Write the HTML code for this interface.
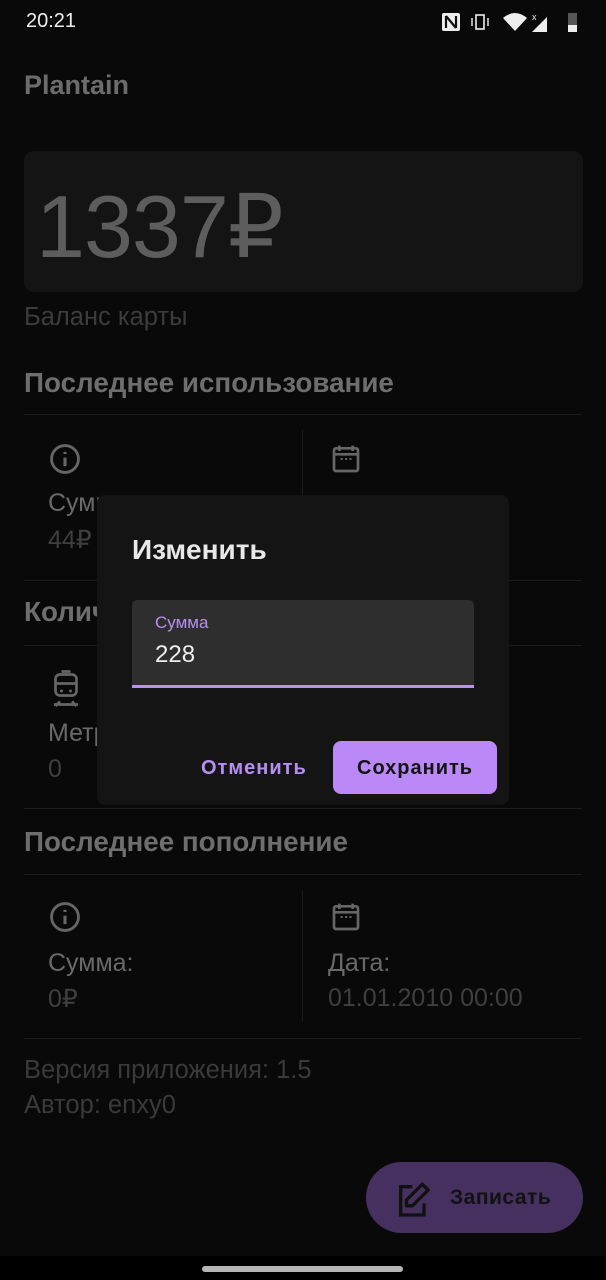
<!DOCTYPE html>
<html><head><meta charset="utf-8"><style>
*{margin:0;padding:0;box-sizing:border-box}
body{width:606px;height:1280px;background:#090909;font-family:"Liberation Sans",sans-serif;position:relative;overflow:hidden;color:#6a6a6a}
.a{position:absolute;white-space:nowrap}
.hr{position:absolute;left:24px;width:558px;height:1px;background:#1c1c1c}
.vr{position:absolute;left:302px;width:1px;background:#1c1c1c}
.h{font-size:27.8px;font-weight:bold;color:#6e6e6e}
.l{font-size:25px;color:#6a6a6a}
.v{font-size:25px;color:#3f3f3f}
</style></head><body>
<div class="a" style="left:26px;top:10px;font-size:20px;color:#eee">20:21</div>
<svg class="a" style="left:440px;top:10px" width="145" height="24" viewBox="0 0 145 24">
<rect x="2" y="3" width="18" height="18" rx="2" fill="#eee"/><path d="M6 6v12M16 6v12M6 6l10 12" stroke="#111" stroke-width="2.2" fill="none"/>
<rect x="36" y="5" width="8" height="14" fill="none" stroke="#eee" stroke-width="1.6"/><path d="M32 8v8M48 8v8" stroke="#eee" stroke-width="1.4"/>
<path d="M63 8q12-10 24 0l-12 13z" fill="#eee"/>
<path d="M92 22h15V7z" fill="#eee"/><text x="92" y="10" font-size="9" fill="#eee" font-family="Liberation Sans">x</text>
<rect x="128" y="3" width="9" height="19" fill="#555"/><rect x="128" y="15" width="9" height="7" fill="#eee"/>
</svg>
<div class="a" style="left:24px;top:70px;font-size:27px;font-weight:bold;color:#6c6c6c">Plantain</div>
<div class="a" style="left:24px;top:151px;width:559px;height:141px;background:#141414;border-radius:10px"></div>
<div class="a" style="left:36px;top:175px;font-size:88px;font-weight:300;color:#5d5d5d;letter-spacing:-1px">1337₽</div>
<div class="a" style="left:24px;top:303px;font-size:25.5px;color:#3c3c3c">Баланс карты</div>
<div class="a h" style="left:24px;top:367px">Последнее использование</div>
<div class="hr" style="top:414px"></div>
<div class="vr" style="top:430px;height:148px"></div>
<svg class="a" style="left:48px;top:442px" width="34" height="34" viewBox="0 0 24 24"><circle cx="12" cy="12" r="9.5" fill="none" stroke="#666" stroke-width="2"/><path d="M12 11v6M12 7v1.5" stroke="#666" stroke-width="2.2"/></svg>
<svg class="a" style="left:330px;top:442px" width="32" height="34" viewBox="0 0 24 24"><rect x="3" y="4" width="18" height="17" rx="1.5" fill="none" stroke="#666" stroke-width="2"/><path d="M3 8.5h18M7 2v4M17 2v4" stroke="#666" stroke-width="2"/><path d="M8 12h1.5M11.3 12h1.5M14.6 12h1.5" stroke="#666" stroke-width="1.5"/></svg>
<div class="a l" style="left:48px;top:489px">Сумма:</div>
<div class="a v" style="left:48px;top:525px">44₽</div>
<div class="a v" style="left:480px;top:525px">08</div>
<div class="hr" style="top:580px"></div>
<div class="a h" style="left:24px;top:596px">Количество поездок</div>
<div class="hr" style="top:645px"></div>
<svg class="a" style="left:48px;top:668px" width="36" height="40" viewBox="0 0 24 26"><rect x="5" y="4" width="14" height="14" rx="3" fill="none" stroke="#666" stroke-width="1.8"/><path d="M5 10h14M9 2h6M8 22l-3 3M16 22l3 3M4 24h16" stroke="#666" stroke-width="1.8"/><circle cx="9" cy="15" r="1" fill="#666"/><circle cx="15" cy="15" r="1" fill="#666"/></svg>
<div class="a l" style="left:48px;top:719px">Метро:</div>
<div class="a v" style="left:48px;top:755px">0</div>
<div class="hr" style="top:808px"></div>
<div class="a h" style="left:24px;top:826px">Последнее пополнение</div>
<div class="hr" style="top:874px"></div>
<div class="vr" style="top:890px;height:132px"></div>
<svg class="a" style="left:48px;top:900px" width="34" height="34" viewBox="0 0 24 24"><circle cx="12" cy="12" r="9.5" fill="none" stroke="#666" stroke-width="2"/><path d="M12 11v6M12 7v1.5" stroke="#666" stroke-width="2.2"/></svg>
<svg class="a" style="left:330px;top:900px" width="32" height="34" viewBox="0 0 24 24"><rect x="3" y="4" width="18" height="17" rx="1.5" fill="none" stroke="#666" stroke-width="2"/><path d="M3 8.5h18M7 2v4M17 2v4" stroke="#666" stroke-width="2"/><path d="M8 12h1.5M11.3 12h1.5M14.6 12h1.5" stroke="#666" stroke-width="1.5"/></svg>
<div class="a l" style="left:48px;top:949px">Сумма:</div>
<div class="a v" style="left:48px;top:984px">0₽</div>
<div class="a l" style="left:328px;top:949px">Дата:</div>
<div class="a v" style="left:328px;top:984px">01.01.2010 00:00</div>
<div class="hr" style="top:1038px"></div>
<div class="a" style="left:24px;top:1056px;font-size:25.5px;color:#3a3a3a">Версия приложения: 1.5</div>
<div class="a" style="left:24px;top:1091px;font-size:25.5px;color:#3a3a3a">Автор: enxy0</div>
<div class="a" style="left:366px;top:1162px;width:217px;height:71px;border-radius:36px;background:#46305f"></div>
<svg class="a" style="left:394px;top:1180px" width="40" height="40" viewBox="0 0 24 24"><path d="M11 4H4v17h14v-7" fill="none" stroke="#111" stroke-width="2"/><path d="M17 2.5l3.5 3.5L11 15.5H7.5V12z" fill="none" stroke="#111" stroke-width="2" stroke-linejoin="round"/></svg>
<div class="a" style="left:450px;top:1186px;font-size:21px;font-weight:bold;color:#121212;letter-spacing:0.5px">Записать</div>
<div class="a" style="left:0;top:1256px;width:606px;height:24px;background:#000"></div>
<div class="a" style="left:202px;top:1266px;width:201px;height:6px;border-radius:3px;background:#b5b5b5"></div>
<div class="a" style="left:97px;top:495px;width:412px;height:310px;background:#141414;border-radius:8px"></div>
<div class="a" style="left:132px;top:534px;font-size:28px;font-weight:bold;color:#e8e8e8">Изменить</div>
<div class="a" style="left:132px;top:600px;width:342px;height:88px;background:#2e2e2e;border-radius:5px 5px 0 0;border-bottom:3px solid #b994ee"></div>
<div class="a" style="left:155px;top:613px;font-size:17px;color:#b78ff0">Сумма</div>
<div class="a" style="left:155px;top:641px;font-size:24px;color:#eee">228</div>
<div class="a" style="left:201px;top:757px;font-size:20px;font-weight:bold;color:#b58ff0;letter-spacing:1px">Отменить</div>
<div class="a" style="left:333px;top:741px;width:164px;height:53px;background:#bb88f8;border-radius:8px"></div>
<div class="a" style="left:357px;top:757px;font-size:20px;font-weight:bold;color:#131313;letter-spacing:1px">Сохранить</div>
</body></html>
